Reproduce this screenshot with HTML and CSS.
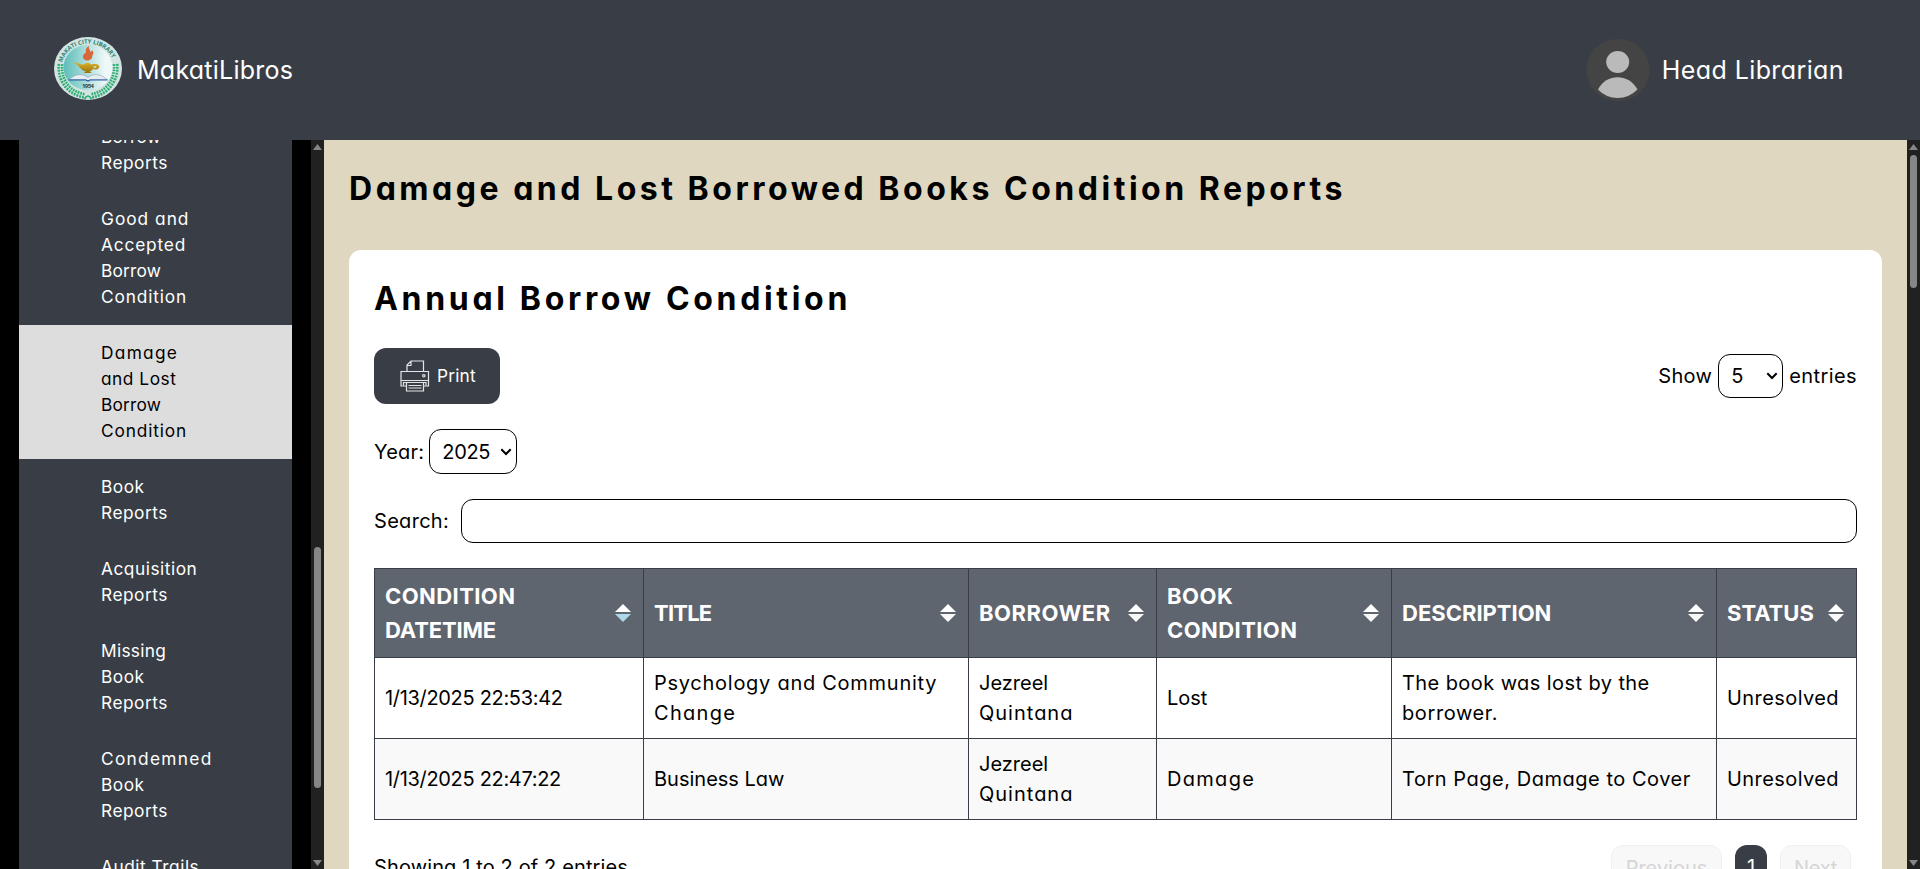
FILE: index.html
```html
<!DOCTYPE html>
<html lang="en">
<head>
<meta charset="utf-8">
<title>MakatiLibros</title>
<link rel="stylesheet" href="styles.css">
</head>
<body>
<header class="topbar">
  <div class="brand">
    <svg class="logo" width="68" height="63" viewBox="0 0 68 63" preserveAspectRatio="none">
      <defs>
        <linearGradient id="disc" x1="0" x2="1" y1="0" y2="0"><stop offset="0" stop-color="#5cbdb9"/><stop offset=".85" stop-color="#eef8f8"/></linearGradient>
        <linearGradient id="gold" x1="0" x2="0" y1="0" y2="1"><stop offset="0" stop-color="#e0b52c"/><stop offset="1" stop-color="#96700e"/></linearGradient>
        <path id="arc" d="M8.2 25.500A26.500 24.500 0 0 1 59.800 25.500"/>
      </defs>
      <ellipse cx="34" cy="31.500" rx="34" ry="31.500" fill="#d3e4e2"/>
      <path d="M6.500 27C5 44 15 56 31 59M61.500 27C63 44 53 56 37 59" fill="none" stroke="#2cab72" stroke-width="6" stroke-dasharray="1.800 1"/>
      <path d="M6.500 27C5 44 15 56 31 59M61.500 27C63 44 53 56 37 59" fill="none" stroke="#c9e8da" stroke-width=".8"/>
      <path d="M30.500 62Q34 56 37.500 62" fill="none" stroke="#2cab72" stroke-width="1.600"/>
      <ellipse cx="34" cy="30.500" rx="24.500" ry="22.800" fill="url(#disc)"/>
      <text class="logo-ring"><textPath href="#arc" textLength="64" startOffset="0">MAKATI CITY LIBRARY</textPath></text>
      <path d="M32 23.500C27 21 29 17 32 15.500C31 12.500 33 10 35 9C34 12 37 13 36 15L39 13.500C39 16 40 17 38 19C39 21 36 24 32 23.500Z" fill="#d9653a"/>
      <path d="M18.500 25C24 25.500 27 28 29.500 27.500Q33.500 24 37.500 27.500C43 26 47 28.500 44.500 31.500Q42.500 33 39 32Q37 34.500 35.500 34.500L38 36H29.500L32 34.500C26 33.500 25 27 18.500 25Z" fill="url(#gold)"/>
      <path d="M39.500 29.500Q43 28.500 42.500 30.300Q41.500 31 39.500 30.500Z" fill="#dff0f0"/>
      <path d="M14.500 42.500L21 38.500Q29 36 34 40.500Q39 36 47 38.500L53.500 42.500H36L34 44L32 42.500Z" fill="#e6edf3" stroke="#7e93a8" stroke-width=".5"/>
      <path d="M14.500 43H32L34 44L36 43H53.500" fill="none" stroke="#2a56a8" stroke-width="1.200"/>
      <text class="logo-year" x="28" y="51" textLength="12">1954</text>
    </svg>
    <span class="brand-name">MakatiLibros</span>
  </div>
  <div class="account">
    <svg class="avatar" width="64" height="62" viewBox="0 0 64 62" preserveAspectRatio="none">
      <ellipse cx="32" cy="31" rx="31.700" ry="31" fill="#444"/>
      <ellipse cx="31.700" cy="23" rx="11.500" ry="11" fill="#bababa"/>
      <path d="M12 50.500C20 34 43 34 51.500 50.500Q43 59 31.700 59Q20 59 12 50.500Z" fill="#bababa"/>
    </svg>
    <span class="account-name">Head Librarian</span>
  </div>
</header>
<div class="shell">
  <aside class="sidebar">
    <nav class="menu">
      <a class="item"><span class="t2">Borrow</span><br><span class="t5">Reports</span></a>
      <a class="item"><span class="t10">Good and</span><br><span class="t8">Accepted</span><br><span class="t2">Borrow</span><br><span class="t8">Condition</span></a>
      <a class="item active"><span class="t12">Damage</span><br><span class="t5">and Lost</span><br><span class="t2">Borrow</span><br><span class="t8">Condition</span></a>
      <a class="item"><span class="t5">Book</span><br><span class="t5">Reports</span></a>
      <a class="item"><span class="t5">Acquisition</span><br><span class="t5">Reports</span></a>
      <a class="item"><span class="t3">Missing</span><br><span class="t5">Book</span><br><span class="t5">Reports</span></a>
      <a class="item"><span class="t12">Condemned</span><br><span class="t5">Book</span><br><span class="t5">Reports</span></a>
      <a class="item"><span class="t5">Audit Trails</span></a>
    </nav>
    <div class="scroll scroll-menu"><i class="up"></i><i class="thumb"></i><i class="down"></i></div>
  </aside>
  <main class="content">
    <h1 class="title">Damage and Lost Borrowed Books Condition Reports</h1>
    <section class="card">
      <h2 class="title subtitle">Annual Borrow Condition</h2>
      <div class="tools">
        <button class="print">
          <svg width="30" height="32" viewBox="0 0 30 32" fill="none" stroke="#e4e5e7" stroke-width="1.200">
            <path d="M7 11.500V5L11 1H23.500V11.500M7 5.500H11V1"/>
            <path d="M6.500 26H1V11.500H28.500V26H23.500M1 20.500H28.500"/>
            <path d="M3.500 25.500V22.500H26V25.500M6.500 23V31H23.500V23M8.500 25.500H21.500M8.500 28H21.500"/>
            <circle cx="23.800" cy="15.800" r="1.200"/>
          </svg>
          <span class="t2">Print</span>
        </button>
        <div class="entries"><span class="t3">Show</span><div class="select select-size"><span>5</span><svg width="12" height="8" viewBox="0 0 12 8"><path d="M1.300 1.300L6 6L10.700 1.300" fill="none" stroke="#000" stroke-width="2"/></svg></div><span class="t4">entries</span></div>
      </div>
      <div class="year"><span class="t2">Year:</span><div class="select select-year"><span class="m3">2025</span><svg width="12" height="8" viewBox="0 0 12 8"><path d="M1.300 1.300L6 6L10.700 1.300" fill="none" stroke="#000" stroke-width="2"/></svg></div></div>
      <div class="search"><span class="t3">Search:</span><input class="search-input" type="text"></div>
      <table class="grid">
        <colgroup><col class="c1"><col class="c2"><col class="c3"><col class="c4"><col class="c5"><col class="c6"></colgroup>
        <thead><tr>
          <th><div class="head"><span><span class="t4">CONDITION</span><br><span class="m2">DATETIME</span></span><svg class="sort sorted" width="16" height="18" viewBox="0 0 16 18"><path d="M0 8L8 0L16 8Z"/><path class="desc" d="M0 10L8 18L16 10Z"/></svg></div></th>
          <th><div class="head"><span class="m8">TITLE</span><svg class="sort" width="16" height="18" viewBox="0 0 16 18"><path d="M0 8L8 0L16 8Z"/><path class="desc" d="M0 10L8 18L16 10Z"/></svg></div></th>
          <th><div class="head"><span class="t5">BORROWER</span><svg class="sort" width="16" height="18" viewBox="0 0 16 18"><path d="M0 8L8 0L16 8Z"/><path class="desc" d="M0 10L8 18L16 10Z"/></svg></div></th>
          <th><div class="head"><span><span class="t5">BOOK</span><br><span class="t4">CONDITION</span></span><svg class="sort" width="16" height="18" viewBox="0 0 16 18"><path d="M0 8L8 0L16 8Z"/><path class="desc" d="M0 10L8 18L16 10Z"/></svg></div></th>
          <th><div class="head"><span>DESCRIPTION</span><svg class="sort" width="16" height="18" viewBox="0 0 16 18"><path d="M0 8L8 0L16 8Z"/><path class="desc" d="M0 10L8 18L16 10Z"/></svg></div></th>
          <th><div class="head"><span>STATUS</span><svg class="sort" width="16" height="18" viewBox="0 0 16 18"><path d="M0 8L8 0L16 8Z"/><path class="desc" d="M0 10L8 18L16 10Z"/></svg></div></th>
        </tr></thead>
        <tbody>
          <tr><td><span class="m3">1/13/2025 22:53:42</span></td><td><span class="t7">Psychology and Community</span><br><span class="t12">Change</span></td><td>Jezreel<br><span class="t10">Quintana</span></td><td>Lost</td><td><span class="t4">The book was lost by the</span><br><span class="t6">borrower.</span></td><td><span class="t4">Unresolved</span></td></tr>
          <tr><td><span class="m3">1/13/2025 22:47:22</span></td><td>Business Law</td><td>Jezreel<br><span class="t10">Quintana</span></td><td><span class="t12">Damage</span></td><td><span class="t5">Torn Page, Damage to Cover</span></td><td><span class="t4">Unresolved</span></td></tr>
        </tbody>
      </table>
      <div class="footer"><span class="t1">Showing 1 to 2 of 2 entries</span>
        <div class="pager"><span class="page muted prev">Previous</span><span class="page current">1</span><span class="page muted"><span class="m3">Next</span></span></div>
      </div>
    </section>
  </main>
  <div class="scroll scroll-page"><i class="up"></i><i class="thumb"></i><i class="down"></i></div>
</div>
</body>
</html>
```
FILE: styles.css
```css
* { box-sizing: border-box; }
html, body { height: 100%; margin: 0; overflow: hidden; }
body {
  display: flex;
  flex-direction: column;
  background: #000;
  color: #000;
  font-family: Inter, "Open Sans", sans-serif;
  font-feature-settings: "cv11";
  font-size: 20px;
  line-height: 30px;
}
.topbar {
  flex: none;
  display: flex;
  justify-content: space-between;
  align-items: center;
  height: 140px;
  padding: 0 76px 0 54px;
  background: #393e46;
  color: #fff;
  font-size: 25px;
}
.brand, .account { display: flex; align-items: center; white-space: nowrap; }
.brand { gap: 15px; }
.account { gap: 12px; }
.brand-name { letter-spacing: .25px; }
.account-name { letter-spacing: .4px; }
.logo { margin-top: -3px; }
.logo-ring { font: bold 6px "Open Sans", sans-serif; fill: #2b8574; }
.logo-year { font: bold 6px "Open Sans", sans-serif; fill: #34484a; }
.shell { flex: 1; display: flex; min-height: 0; }

/* tracking steps, in tenths of a pixel */
.m8 { letter-spacing: -.8px; }
.m3 { letter-spacing: -.32px; }
.m2 { letter-spacing: -.15px; }
.t1 { letter-spacing: .13px; }
.t2 { letter-spacing: .2px; }
.t3 { letter-spacing: .3px; }
.t4 { letter-spacing: .42px; }
.t5 { letter-spacing: .53px; }
.t6 { letter-spacing: .6px; }
.t7 { letter-spacing: .73px; }
.t8 { letter-spacing: .84px; }
.t10 { letter-spacing: 1px; }
.t12 { letter-spacing: 1.3px; }

.sidebar { flex: none; display: flex; width: 324px; padding-left: 19px; min-height: 0; }
.menu {
  display: flex;
  flex-direction: column;
  width: 273px;
  margin-right: 19px;
  overflow: hidden;
  background: #393e46;
}
.item {
  flex: none;
  padding: 15px 0 15px 82px;
  color: #fff;
  font-size: 17.3px;
  line-height: 26px;
}
.item:first-child { margin-top: -31px; }
.item.active { background: #ddd; color: #000; }

.scroll {
  flex: none;
  display: flex;
  flex-direction: column;
  align-items: center;
  width: 13px;
  background: #212121;
}
.up, .down { width: 9px; height: 6px; background: #868686; }
.up { margin-top: 4px; clip-path: polygon(50% 0, 100% 100%, 0 100%); }
.down { margin: auto 0 3px; clip-path: polygon(0 0, 100% 0, 50% 100%); }
.thumb { width: 7px; border-radius: 4px; background: #868686; }
.scroll-menu .thumb { height: 241px; margin-top: 397px; }
.scroll-page .thumb { height: 133px; margin-top: 5px; }

.content { flex: 1; min-width: 0; padding: 25px; background: #dfd7bf; overflow: hidden; }
.title { margin: 0; font-size: 32px; line-height: 48px; font-weight: 700; letter-spacing: 3.52px; white-space: nowrap; }
.subtitle { letter-spacing: 3.68px; }
.card { height: 700px; margin-top: 37px; padding: 25px; border-radius: 12px; background: #fff; }
.tools { display: flex; justify-content: space-between; align-items: center; height: 56px; margin-top: 25px; }
.print {
  display: flex;
  align-items: center;
  gap: 7px;
  width: 126px;
  height: 56px;
  padding: 0 0 0 26px;
  border: 0;
  border-radius: 12px;
  background: #393e46;
  color: #fff;
  font: inherit;
  font-size: 17.3px;
}
.entries, .year, .search { display: flex; align-items: center; white-space: nowrap; }
.entries { gap: 6px; }
.year { gap: 5px; margin-top: 25px; }
.select {
  display: flex;
  align-items: center;
  justify-content: space-between;
  height: 45px;
  padding: 0 4px 0 12px;
  border: 1px solid #000;
  border-radius: 12px;
}
.select-size { width: 65px; height: 44px; }
.select-year { width: 88px; }
.search { gap: 12px; margin-top: 25px; }
.search-input { flex: 1; height: 44px; border: 1px solid #000; border-radius: 12px; background: #fff; }

.grid { width: 1483px; height: 252px; margin-top: 25px; border-collapse: collapse; table-layout: fixed; }
.grid th, .grid td { padding: 10px 0 10px 10px; border: 1px solid #393e46; text-align: left; white-space: nowrap; }
.grid th { height: 89px; padding-right: 12px; background: #5f656e; color: #fff; font-size: 22px; line-height: 34px; }
.grid td { height: 81px; }
.grid tbody tr:nth-child(2) { background: #f9f9f9; }
.c1 { width: 269px; }
.c2 { width: 325px; }
.c3 { width: 188px; }
.c4 { width: 235px; }
.c5 { width: 325px; }
.c6 { width: 140px; }
.head { display: flex; justify-content: space-between; align-items: center; }
.sort { flex: none; fill: #fff; }
.sort .desc { fill: #f7f7f7; }
.sorted .desc { fill: #add8e6; }

.footer { display: flex; justify-content: space-between; align-items: center; margin-top: 25px; padding-right: 6px; white-space: nowrap; }
.pager { display: flex; gap: 13px; }
.page { display: flex; justify-content: center; width: 71px; height: 44px; padding-top: 7px; border-radius: 12px; }
.prev { width: 111px; }
.muted { border: 1px solid #f0f0f0; background: #f8f8f8; color: #d5d5d5; }
.current { width: 32px; background: #393e46; color: #fff; }
```
